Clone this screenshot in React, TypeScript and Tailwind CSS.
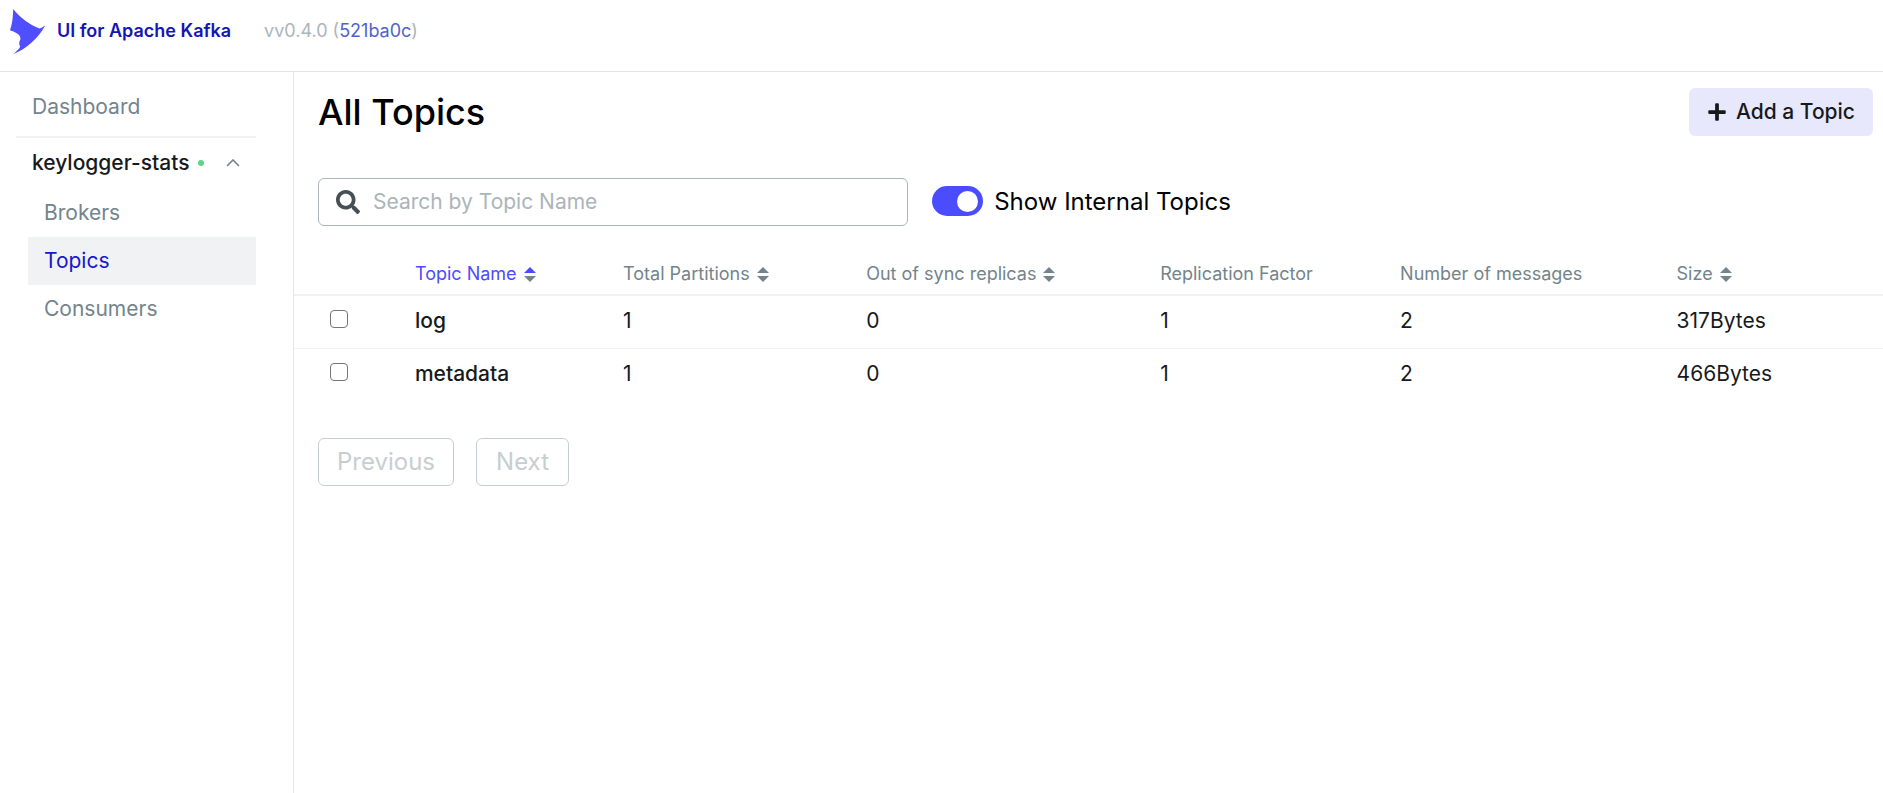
import { useState } from "react";
import { FaPlus, FaSearch } from "react-icons/fa";

type Topic = {
  name: string;
  partitions: number;
  outOfSync: number;
  replication: number;
  messages: number;
  size: string;
};

const topics: Topic[] = [
  { name: "log", partitions: 1, outOfSync: 0, replication: 1, messages: 2, size: "317Bytes" },
  { name: "metadata", partitions: 1, outOfSync: 0, replication: 1, messages: 2, size: "466Bytes" },
];

const columns = [
  { title: "Topic Name", sortable: true, active: true, width: "w-[13.1%]" },
  { title: "Total Partitions", sortable: true, active: false, width: "w-[15.3%]" },
  { title: "Out of sync replicas", sortable: true, active: false, width: "w-[18.5%]" },
  { title: "Replication Factor", sortable: false, active: false, width: "w-[15.1%]" },
  { title: "Number of messages", sortable: false, active: false, width: "w-[17.4%]" },
  { title: "Size", sortable: true, active: false, width: "w-[14.5%]" },
];

function Logo() {
  return (
    <svg viewBox="0 0 36 46" className="h-[46px] w-9" aria-hidden="true">
      <path
        d="M3.2 0C10 8.500 20 16 29.500 19.500C31.500 19 33.500 17.500 35.200 16.500C28 29.500 17 39.500 3.300 45.200C6 42.500 9.500 40 10.200 37.500C8.800 35.500 8.800 33.500 10.500 30C10.800 25.500 5.500 23 0 21.200C2.200 15.500 3 8 3.200 0Z"
        fill="#4f4fff"
      />
    </svg>
  );
}

function SortIcon({ active }: { active: boolean }) {
  return (
    <svg viewBox="0 0 12 15" className="h-[15px] w-3" aria-hidden="true">
      <path d="M6 0L12 6H0Z" fill={active ? "#4c4cff" : "#73848c"} />
      <path d="M0 9H12L6 15Z" fill="#73848c" />
    </svg>
  );
}

function Sidebar() {
  const items = ["Brokers", "Topics", "Consumers"];
  return (
    <nav className="w-[294px] shrink-0 border-r border-[#e3e6e8] pr-[37px] pl-4 text-[21px] leading-6">
      <a href="#dashboard" className="flex h-[66px] items-center border-b-2 border-[#f1f2f3] pt-[6px] pl-4 text-[#73848c]">
        Dashboard
      </a>
      <button type="button" className="flex h-[50px] w-full items-center pr-4 pl-4 font-medium text-[#171a1c]">
        keylogger-stats
        <span className="ml-[9px] size-[6px] rounded-full bg-[#5cd685]" />
        <svg viewBox="0 0 14 8" className="ml-auto h-2 w-[14px]" fill="none" aria-hidden="true">
          <path d="M1 7L7 1L13 7" stroke="#73848c" strokeWidth="1.6" />
        </svg>
      </button>
      <ul className="pt-px pl-3">
        {items.map((item) => (
          <li key={item}>
            <a
              href={"#" + item.toLowerCase()}
              className={
                item === "Topics"
                  ? "flex h-12 items-center bg-[#f1f2f3] pb-px pl-4 text-[#1717cf]"
                  : "flex h-12 items-center pb-px pl-4 text-[#73848c]"
              }
            >
              {item}
            </a>
          </li>
        ))}
      </ul>
    </nav>
  );
}

export default function App() {
  const [internal, setInternal] = useState(true);
  return (
    <div className="flex min-h-screen flex-col bg-white font-['Inter',sans-serif] text-black">
      <header className="flex h-[72px] items-center border-b border-[#e3e6e8] pb-2 pl-[10px]">
        <Logo />
        <span className="ml-[11px] pb-px text-lg leading-6 font-semibold text-[#1414b8]">UI for Apache Kafka</span>
        <span className="ml-[33px] pb-px text-lg leading-6 text-[#abb5ba]">
          vv0.4.0 (
          <a href="#521ba0c" className="text-[#4f63cc]">
            521ba0c
          </a>
          )
        </span>
      </header>
      <div className="flex flex-1">
        <Sidebar />
        <main className="min-w-0 flex-1">
          <div className="flex h-20 items-center justify-between pr-[10px] pl-6">
            <h1 className="text-4xl font-medium">All Topics</h1>
            <button
              type="button"
              className="flex h-12 items-center gap-[9px] rounded-md bg-[#e8e8fc] px-[18px] text-[21px] font-medium text-[#171a1c]"
            >
              <FaPlus className="size-5" />
              Add a Topic
            </button>
          </div>
          <div className="flex items-center px-6 pt-[26px]">
            <label className="flex h-12 w-[38.3%] items-center gap-[13px] rounded-md border border-[#abb5ba] px-[17px]">
              <FaSearch className="size-6 shrink-0 text-[#454f54]" />
              <input
                type="text"
                aria-label="Search by Topic Name"
                placeholder="Search by Topic Name"
                className="min-w-0 flex-1 bg-transparent text-[21px] outline-none placeholder:text-[#abb5ba]"
              />
            </label>
            <label className="relative ml-6 flex items-center gap-[11px] text-2xl">
              <input
                type="checkbox"
                checked={internal}
                onChange={(e) => setInternal(e.target.checked)}
                className="peer sr-only"
              />
              <span className="mb-[2px] flex h-[30px] w-[51px] items-center rounded-full bg-[#abb5ba] px-[5px] peer-checked:justify-end peer-checked:bg-[#4c4cff]">
                <span className="size-[21px] rounded-full bg-white" />
              </span>
              Show Internal Topics
            </label>
          </div>
          <table className="mt-[26px] w-full table-fixed border-collapse text-left">
            <thead>
              <tr className="h-[43px] border-b-2 border-[#f1f2f3]">
                <th className="w-[6.1%]" aria-label="Select" />
                {columns.map((c) => (
                  <th
                    key={c.title}
                    className={
                      c.width + " pt-[2px] pl-6 text-lg font-normal whitespace-nowrap " + (c.active ? "text-[#4c4cff]" : "text-[#73848c]")
                    }
                  >
                    <span className="flex items-center gap-[7px]">
                      {c.title}
                      {c.sortable && <SortIcon active={c.active} />}
                    </span>
                  </th>
                ))}
              </tr>
            </thead>
            <tbody className="text-[21px] leading-6 text-[#171a1c]">
              {topics.map((t) => (
                <tr key={t.name} className="h-[53px] border-b border-[#f1f2f3] last:border-b-0">
                  <td className="pb-[6px] pl-9">
                    <input
                      type="checkbox"
                      aria-label={"Select " + t.name}
                      className="block size-[18px] appearance-none rounded-[4px] border border-[#767676] bg-white checked:bg-[#4c4cff]"
                    />
                  </td>
                  <td className="pb-px pl-6 font-medium">
                    <a href={"#" + t.name}>{t.name}</a>
                  </td>
                  <td className="pb-px pl-6">{t.partitions}</td>
                  <td className="pb-px pl-6">{t.outOfSync}</td>
                  <td className="pb-px pl-6">{t.replication}</td>
                  <td className="pb-px pl-6">{t.messages}</td>
                  <td className="pb-px pl-6">{t.size}</td>
                </tr>
              ))}
            </tbody>
          </table>
          <div className="flex gap-[22px] px-6 pt-[37px] text-2xl text-[#c7ced1]">
            <button type="button" disabled className="h-12 rounded-md border border-[#c7ced1] px-[18px]">
              Previous
            </button>
            <button type="button" disabled className="h-12 rounded-md border border-[#c7ced1] px-[19px]">
              Next
            </button>
          </div>
        </main>
      </div>
    </div>
  );
}
